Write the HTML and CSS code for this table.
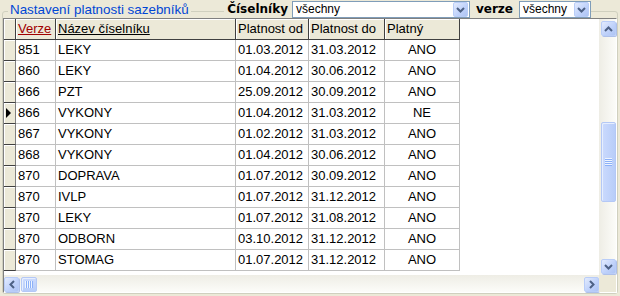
FILE: index.html
```html
<!DOCTYPE html>
<html lang="cs">
<head>
  <meta charset="UTF-8" />
  <title>Nastavení platnosti sazebníků</title>
  <link rel="stylesheet" href="styles.css">
</head>
<body>

  <div class="frame">
    <div class="frame-head">
      <span class="frame-title">Nastavení platnosti sazebníků</span>
      <span class="field-label first">Číselníky</span>
      <div class="combo combo-wide">
        <span class="combo-text">všechny</span>
        <span class="combo-btn">
          <svg width="9" height="6" viewBox="0 0 9 6"><path d="M1 1l3.5 3.5L8 1" fill="none" stroke="#4d6185" stroke-width="2"/></svg>
        </span>
      </div>
      <span class="field-label second">verze</span>
      <div class="combo combo-narrow">
        <span class="combo-text">všechny</span>
        <span class="combo-btn">
          <svg width="9" height="6" viewBox="0 0 9 6"><path d="M1 1l3.5 3.5L8 1" fill="none" stroke="#4d6185" stroke-width="2"/></svg>
        </span>
      </div>
    </div>

    <div class="grid">
      <div class="sheet">
        <div class="row head">
          <span class="ind"></span>
          <span class="sorted">Verze</span>
          <span class="linked">Název číselníku</span>
          <span>Platnost od</span>
          <span>Platnost do</span>
          <span>Platný</span>
        </div>
        <div class="row"><span class="ind"></span><span>851</span><span>LEKY</span><span>01.03.2012</span><span>31.03.2012</span><span class="c">ANO</span></div>
        <div class="row"><span class="ind"></span><span>860</span><span>LEKY</span><span>01.04.2012</span><span>30.06.2012</span><span class="c">ANO</span></div>
        <div class="row"><span class="ind"></span><span>866</span><span>PZT</span><span>25.09.2012</span><span>30.09.2012</span><span class="c">ANO</span></div>
        <div class="row"><span class="ind current"><i class="arrow"></i></span><span>866</span><span>VYKONY</span><span>01.04.2012</span><span>31.03.2012</span><span class="c">NE</span></div>
        <div class="row"><span class="ind"></span><span>867</span><span>VYKONY</span><span>01.02.2012</span><span>31.03.2012</span><span class="c">ANO</span></div>
        <div class="row"><span class="ind"></span><span>868</span><span>VYKONY</span><span>01.04.2012</span><span>30.06.2012</span><span class="c">ANO</span></div>
        <div class="row"><span class="ind"></span><span>870</span><span>DOPRAVA</span><span>01.07.2012</span><span>30.09.2012</span><span class="c">ANO</span></div>
        <div class="row"><span class="ind"></span><span>870</span><span>IVLP</span><span>01.07.2012</span><span>31.12.2012</span><span class="c">ANO</span></div>
        <div class="row"><span class="ind"></span><span>870</span><span>LEKY</span><span>01.07.2012</span><span>31.08.2012</span><span class="c">ANO</span></div>
        <div class="row"><span class="ind"></span><span>870</span><span>ODBORN</span><span>03.10.2012</span><span>31.12.2012</span><span class="c">ANO</span></div>
        <div class="row"><span class="ind"></span><span>870</span><span>STOMAG</span><span>01.07.2012</span><span>31.12.2012</span><span class="c">ANO</span></div>
      </div>

      <!-- vertical scrollbar -->
      <div class="vscroll">
        <span class="sb-btn">
          <svg width="9" height="6" viewBox="0 0 9 6"><path d="M1 5l3.5-3.5L8 5" fill="none" stroke="#4d6185" stroke-width="2"/></svg>
        </span>
        <span class="thumb thumb-v"><i class="grip grip-v"></i></span>
        <span class="sb-btn sb-end">
          <svg width="9" height="6" viewBox="0 0 9 6"><path d="M1 1l3.5 3.5L8 1" fill="none" stroke="#4d6185" stroke-width="2"/></svg>
        </span>
      </div>

      <!-- horizontal scrollbar -->
      <div class="hscroll">
        <span class="sb-btn">
          <svg width="6" height="9" viewBox="0 0 6 9"><path d="M5 1L1.5 4.5 5 8" fill="none" stroke="#4d6185" stroke-width="2"/></svg>
        </span>
        <span class="thumb thumb-h"><i class="grip grip-h"></i></span>
        <span class="sb-btn sb-end">
          <svg width="6" height="9" viewBox="0 0 6 9"><path d="M1 1l3.5 3.5L1 8" fill="none" stroke="#4d6185" stroke-width="2"/></svg>
        </span>
      </div>

      <div class="corner"></div>
    </div>
  </div>

</body>
</html>
```

FILE: styles.css
```css
* {
  box-sizing: border-box;
}

html,
body {
  margin: 0;
}

body {
  width: 620px;
  height: 296px;
  overflow: hidden;
  background: #ece9d8;
  font-family: "Liberation Sans", Arial, sans-serif;
  font-size: 13px;
  color: #000;
}

/* group box */
.frame {
  display: flex;
  flex-direction: column;
  height: 283px;
  margin: 11px 2px 2px;
  border: 1px solid #d0d0bf;
  border-radius: 3px;
}

.frame-head {
  display: flex;
  align-items: center;
  height: 17px;
  margin-top: -11px;
}

.frame-title {
  margin-left: 5px;
  padding: 0 2px;
  background: #ece9d8;
  color: #0046d5;
  font-size: 13.4px;
  line-height: 17px;
}

.field-label {
  background: #ece9d8;
  font-family: "DejaVu Sans", Verdana, sans-serif;
  font-weight: bold;
  font-size: 12px;
  line-height: 17px;
}

.field-label.first {
  margin-left: auto;
  padding: 0 4px 0 3px;
}

.field-label.second {
  padding: 0 6px 0 6px;
}

.combo {
  display: flex;
  height: 17px;
  border: 1px solid #7f9db9;
  background: #fff;
}

.combo-wide {
  width: 178px;
}

.combo-narrow {
  width: 72px;
  margin-right: 26px;
}

.combo-text {
  flex: 1;
  padding-left: 3px;
  font-size: 12px;
  line-height: 15px;
}

.combo-btn {
  display: flex;
  align-items: center;
  justify-content: center;
  width: 15px;
  margin: 0 1px 0 0;
  border: 1px solid #b9cdf8;
  border-radius: 2px;
  background: linear-gradient(135deg, #e3ebfd, #c1d3fb 55%, #aec4f4);
}

/* data grid */
.grid {
  flex: 1;
  display: grid;
  grid-template-columns: 1fr 17px;
  grid-template-rows: 1fr 17px;
  border: 1px solid;
  border-color: #808080 #fff #fff #808080;
  background: #fff;
}

.sheet {
  overflow: hidden;
}

.row {
  display: grid;
  grid-template-columns: 12px 40px 180px 73px 76px 75px;
  height: 21px;
}

.row > span {
  padding-left: 2px;
  border-right: 1px solid #c0c0c0;
  border-bottom: 1px solid #c0c0c0;
  line-height: 20px;
  white-space: nowrap;
  overflow: hidden;
}

.row > .c {
  padding-left: 0;
  text-align: center;
}

.row.head > span {
  background: #ece9d8;
  border-right-color: #404040;
  border-bottom-color: #404040;
  box-shadow: inset 1px 1px 0 #fff;
}

.row .sorted {
  color: #a00000;
  text-decoration: underline;
}

.row .linked {
  text-decoration: underline;
}

.row > .ind {
  display: flex;
  align-items: center;
  padding-left: 2px;
  background: #ece9d8;
  border-right-color: #808080;
  border-bottom-color: #404040;
  box-shadow: inset 1px 1px 0 #fff;
}

.arrow {
  width: 0;
  height: 0;
  border-left: 5px solid #000;
  border-top: 5px solid transparent;
  border-bottom: 5px solid transparent;
}

/* scrollbars */
.vscroll {
  display: flex;
  flex-direction: column;
  background: linear-gradient(to right, #eeede5, #fcfcf9);
}

.hscroll {
  display: flex;
  background: linear-gradient(#eeede5, #fcfcf9);
}

.corner {
  background: #ece9d8;
}

.sb-btn {
  display: flex;
  align-items: center;
  justify-content: center;
  width: 15px;
  height: 15px;
  border: 1px solid #b9cdf8;
  border-radius: 2px;
  background: linear-gradient(135deg, #e3ebfd, #c1d3fb 55%, #aec4f4);
  box-shadow: 1px 1px 0 #aec0ea;
}

.vscroll .sb-btn {
  margin: 2px 0 0 2px;
}

.vscroll .sb-end {
  margin-top: auto;
  margin-bottom: 1px;
}

.hscroll .sb-btn {
  margin-top: 2px;
}

.hscroll .sb-end {
  margin-left: auto;
}

.thumb {
  display: flex;
  align-items: center;
  justify-content: center;
  border: 1px solid #b4c8f6;
  border-radius: 2px;
  box-shadow: inset 1px 1px 0 #e6eefe;
}

.thumb-v {
  width: 15px;
  height: 80px;
  margin: 86px 0 0 2px;
  background: linear-gradient(to right, #cbdafd, #b8cdf9);
}

.thumb-h {
  width: 16px;
  height: 15px;
  margin: 2px 0 0 2px;
  background: linear-gradient(#cbdafd, #b8cdf9);
}

.grip-v {
  width: 7px;
  height: 8px;
  background: repeating-linear-gradient(#eef4fe 0 1px, #8cb0f8 1px 2px);
}

.grip-h {
  width: 8px;
  height: 7px;
  background: repeating-linear-gradient(to right, #eef4fe 0 1px, #8cb0f8 1px 2px);
}
```
